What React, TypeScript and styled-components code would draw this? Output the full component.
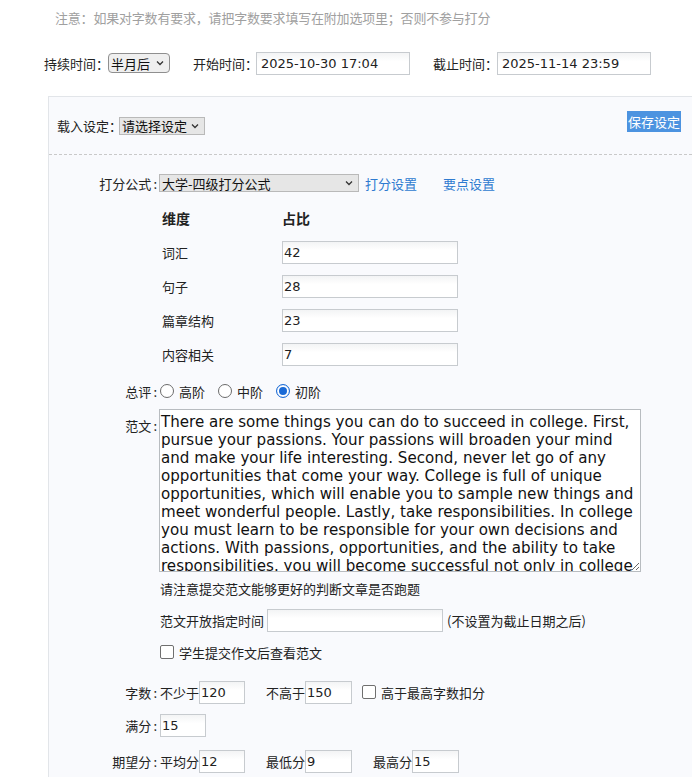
import React from "react";
import styled, { createGlobalStyle } from "styled-components";

const Global = createGlobalStyle`
  html, body { margin: 0; padding: 0; background: #ffffff; }
  body {
    font-family: "Noto Sans CJK SC", "Noto Sans", sans-serif;
    font-size: 13px;
    color: #222;
  }
  * { box-sizing: border-box; }
`;

const Page = styled.div`
  width: 692px;
  height: 777px;
  overflow: hidden;
`;

const Note = styled.div`
  height: 36px;
  line-height: 36px;
  padding-left: 55px;
  color: #a0a0a0;
  font-size: 13px;
  letter-spacing: -0.2px;
`;

const TimeRow = styled.div`
  display: flex;
  align-items: center;
  height: 24px;
  margin-top: 15px;
  padding-left: 44px;
`;

const Label = styled.span<{ $gap?: number; $w?: number }>`
  display: inline-block;
  white-space: nowrap;
  overflow: visible;
  margin-left: ${(p) => p.$gap ?? 0}px;
  width: ${(p) => (p.$w ? `${p.$w}px` : "auto")};
`;

const Colon = styled.span`
  margin: 0 2px 0 2px;
`;

const SelectBox = styled.div<{ $w: number; $h: number; $round?: boolean }>`
  display: inline-flex;
  align-items: center;
  justify-content: space-between;
  width: ${(p) => p.$w}px;
  height: ${(p) => p.$h}px;
  padding: 0 5px 0 2px;
  border: 1px solid ${(p) => (p.$round ? "#8f8f8f" : "#b9b9b9")};
  border-radius: ${(p) => (p.$round ? 4 : 0)}px;
  background: ${(p) => (p.$round ? "#efefef" : "#e6e6e6")};
  color: #111;
  font-size: 13px;
  white-space: nowrap;
`;

const TextInput = styled.div<{ $w: number; $h?: number; $ml?: number; $pl?: number }>`
  display: inline-flex;
  align-items: center;
  width: ${(p) => p.$w}px;
  height: ${(p) => p.$h ?? 23}px;
  margin-left: ${(p) => p.$ml ?? 0}px;
  padding-left: ${(p) => p.$pl ?? 4}px;
  border: 1px solid #c7cbcf;
  background: linear-gradient(#f3f4f5, #ffffff 40%);
  font-family: "DejaVu Sans", sans-serif;
  font-size: 13px;
  color: #222;
`;

const Panel = styled.div`
  margin-top: 21px;
  margin-left: 48px;
  border-top: 1px solid #e2e5e9;
  border-left: 1px solid #e2e5e9;
  background: #f9fafd;
  height: 700px;
`;

const LoadRow = styled.div`
  display: flex;
  align-items: center;
  height: 58px;
  padding-left: 8px;
  border-bottom: 1px dashed #c9c9c9;
`;

const SaveButton = styled.div`
  margin-left: auto;
  margin-right: 11px;
  align-self: flex-start;
  margin-top: 14px;
  height: 21px;
  width: 54px;
  line-height: 21px;
  text-align: center;
  background: #4c93e0;
  color: #fff;
  font-size: 13px;
`;

const FieldRow = styled.div<{ $mt: number; $top?: boolean }>`
  display: flex;
  align-items: ${(p) => (p.$top ? "flex-start" : "center")};
  min-height: 24px;
  margin-top: ${(p) => p.$mt}px;
`;

const FieldLabel = styled.div<{ $pt?: number }>`
  width: 110px;
  flex: none;
  text-align: right;
  white-space: nowrap;
  padding-top: ${(p) => p.$pt ?? 0}px;
`;

const Link = styled.span<{ $ml: number }>`
  color: #2f7bd0;
  margin-left: ${(p) => p.$ml}px;
`;

const Table = styled.div`
  margin-top: 6px;
  margin-left: 110px;
  padding-left: 3px;
`;

const TRow = styled.div`
  display: flex;
  align-items: center;
  height: 34px;
`;

const TName = styled.div<{ $bold?: boolean }>`
  width: 120px;
  font-size: ${(p) => (p.$bold ? 14 : 13)}px;
  font-weight: ${(p) => (p.$bold ? 700 : 400)};
  color: #222;
`;

const TValue = styled.div`
  font-size: 14px;
  font-weight: 700;
`;

const RadioGroup = styled.div`
  display: flex;
  align-items: center;
`;

const RadioItem = styled.label<{ $ml: number }>`
  display: inline-flex;
  align-items: center;
  margin-left: ${(p) => p.$ml}px;
`;

const RadioCircle = styled.span<{ $on?: boolean }>`
  display: inline-block;
  width: 14px;
  height: 14px;
  border-radius: 50%;
  border: 1px solid ${(p) => (p.$on ? "#1a6ad6" : "#6b6b6b")};
  background: #fff;
  margin-right: 5px;
  box-shadow: ${(p) => (p.$on ? "inset 0 0 0 2px #fff, inset 0 0 0 7px #1a6ad6" : "none")};
`;

const Essay = styled.textarea`
  width: 482px;
  height: 163px;
  padding: 3px 1px 0 1px;
  border: 1px solid #b8bcc0;
  background: #fff;
  font-family: "DejaVu Sans", sans-serif;
  font-size: 15.1px;
  line-height: 18px;
  color: #111;
  overflow: hidden;
  resize: both;
  display: block;
`;

const Content = styled.div`
  display: flex;
  align-items: center;
  white-space: nowrap;
  margin-left: 1px;
`;

const CheckBox = styled.span<{ $ml?: number }>`
  display: inline-block;
  width: 14px;
  height: 14px;
  border: 1px solid #6f6f6f;
  border-radius: 2px;
  background: #fff;
  margin-left: ${(p) => p.$ml ?? 0}px;
  margin-right: 5px;
`;

const Chevron = () => (
  <svg width="8" height="6" viewBox="0 0 8 6">
    <path d="M1 1.5 L4 4.5 L7 1.5" fill="none" stroke="#333" strokeWidth="1.3" />
  </svg>
);

const essay =
  "There are some things you can do to succeed in college. First, pursue your passions. Your passions will broaden your mind and make your life interesting. Second, never let go of any opportunities that come your way. College is full of unique opportunities, which will enable you to sample new things and meet wonderful people. Lastly, take responsibilities. In college you must learn to be responsible for your own decisions and actions. With passions, opportunities, and the ability to take responsibilities. you will become successful not only in college but also in life.";

const dims = [
  ["词汇", "42"],
  ["句子", "28"],
  ["篇章结构", "23"],
  ["内容相关", "7"],
];

const L = ({ t }: { t: string }) => (
  <>
    {t}
    <Colon>:</Colon>
  </>
);

export default function App() {
  return (
    <Page>
      <Global />
      <Note>注意：如果对字数有要求，请把字数要求填写在附加选项里；否则不参与打分</Note>
      <TimeRow>
        <Label $w={64}>持续时间：</Label>
        <SelectBox $w={62} $h={20} $round>
          <span>半月后</span>
          <Chevron />
        </SelectBox>
        <Label $gap={23} $w={63}>开始时间：</Label>
        <TextInput $w={154}>2025-10-30 17:04</TextInput>
        <Label $gap={23} $w={64}>截止时间：</Label>
        <TextInput $w={154}>2025-11-14 23:59</TextInput>
      </TimeRow>
      <Panel>
        <LoadRow>
          <Label $w={62}>载入设定：</Label>
          <SelectBox $w={86} $h={18}>
            <span>请选择设定</span>
            <Chevron />
          </SelectBox>
          <SaveButton>保存设定</SaveButton>
        </LoadRow>

        <FieldRow $mt={16}>
          <FieldLabel>
            <L t="打分公式" />
          </FieldLabel>
          <SelectBox $w={200} $h={18}>
            <span>大学-四级打分公式</span>
            <Chevron />
          </SelectBox>
          <Link $ml={6}>打分设置</Link>
          <Link $ml={26}>要点设置</Link>
        </FieldRow>

        <Table>
          <TRow>
            <TName $bold>维度</TName>
            <TValue>占比</TValue>
          </TRow>
          {dims.map(([n, v]) => (
            <TRow key={n}>
              <TName>{n}</TName>
              <TextInput $w={176} $pl={1}>
                {v}
              </TextInput>
            </TRow>
          ))}
        </Table>

        <FieldRow $mt={8}>
          <FieldLabel>
            <L t="总评" />
          </FieldLabel>
          <RadioGroup>
            <RadioItem $ml={1}>
              <RadioCircle />
              高阶
            </RadioItem>
            <RadioItem $ml={13}>
              <RadioCircle />
              中阶
            </RadioItem>
            <RadioItem $ml={13}>
              <RadioCircle $on />
              初阶
            </RadioItem>
          </RadioGroup>
        </FieldRow>

        <FieldRow $mt={6} $top>
          <FieldLabel $pt={7}>
            <L t="范文" />
          </FieldLabel>
          <Essay readOnly value={essay} />
        </FieldRow>

        <FieldRow $mt={4}>
          <FieldLabel />
          <Content>请注意提交范文能够更好的判断文章是否跑题</Content>
        </FieldRow>

        <FieldRow $mt={8}>
          <FieldLabel />
          <Content>
            范文开放指定时间
            <TextInput $w={176} $ml={3} />
            <span style={{ marginLeft: 4 }}>(不设置为截止日期之后)</span>
          </Content>
        </FieldRow>

        <FieldRow $mt={8}>
          <FieldLabel />
          <Content>
            <CheckBox />
            学生提交作文后查看范文
          </Content>
        </FieldRow>

        <FieldRow $mt={16}>
          <FieldLabel>
            <L t="字数" />
          </FieldLabel>
          <Content>
            不少于
            <TextInput $w={46} $pl={1}>120</TextInput>
            <Label $gap={21}>不高于</Label>
            <TextInput $w={47} $pl={1}>150</TextInput>
            <CheckBox $ml={10} />
            高于最高字数扣分
          </Content>
        </FieldRow>

        <FieldRow $mt={9}>
          <FieldLabel>
            <L t="满分" />
          </FieldLabel>
          <Content>
            <TextInput $w={46} $pl={1}>15</TextInput>
          </Content>
        </FieldRow>

        <FieldRow $mt={12}>
          <FieldLabel>
            <L t="期望分" />
          </FieldLabel>
          <Content>
            平均分
            <TextInput $w={46} $pl={1}>12</TextInput>
            <Label $gap={21}>最低分</Label>
            <TextInput $w={47} $pl={1}>9</TextInput>
            <Label $gap={21}>最高分</Label>
            <TextInput $w={47} $pl={1}>15</TextInput>
          </Content>
        </FieldRow>
      </Panel>
    </Page>
  );
}
